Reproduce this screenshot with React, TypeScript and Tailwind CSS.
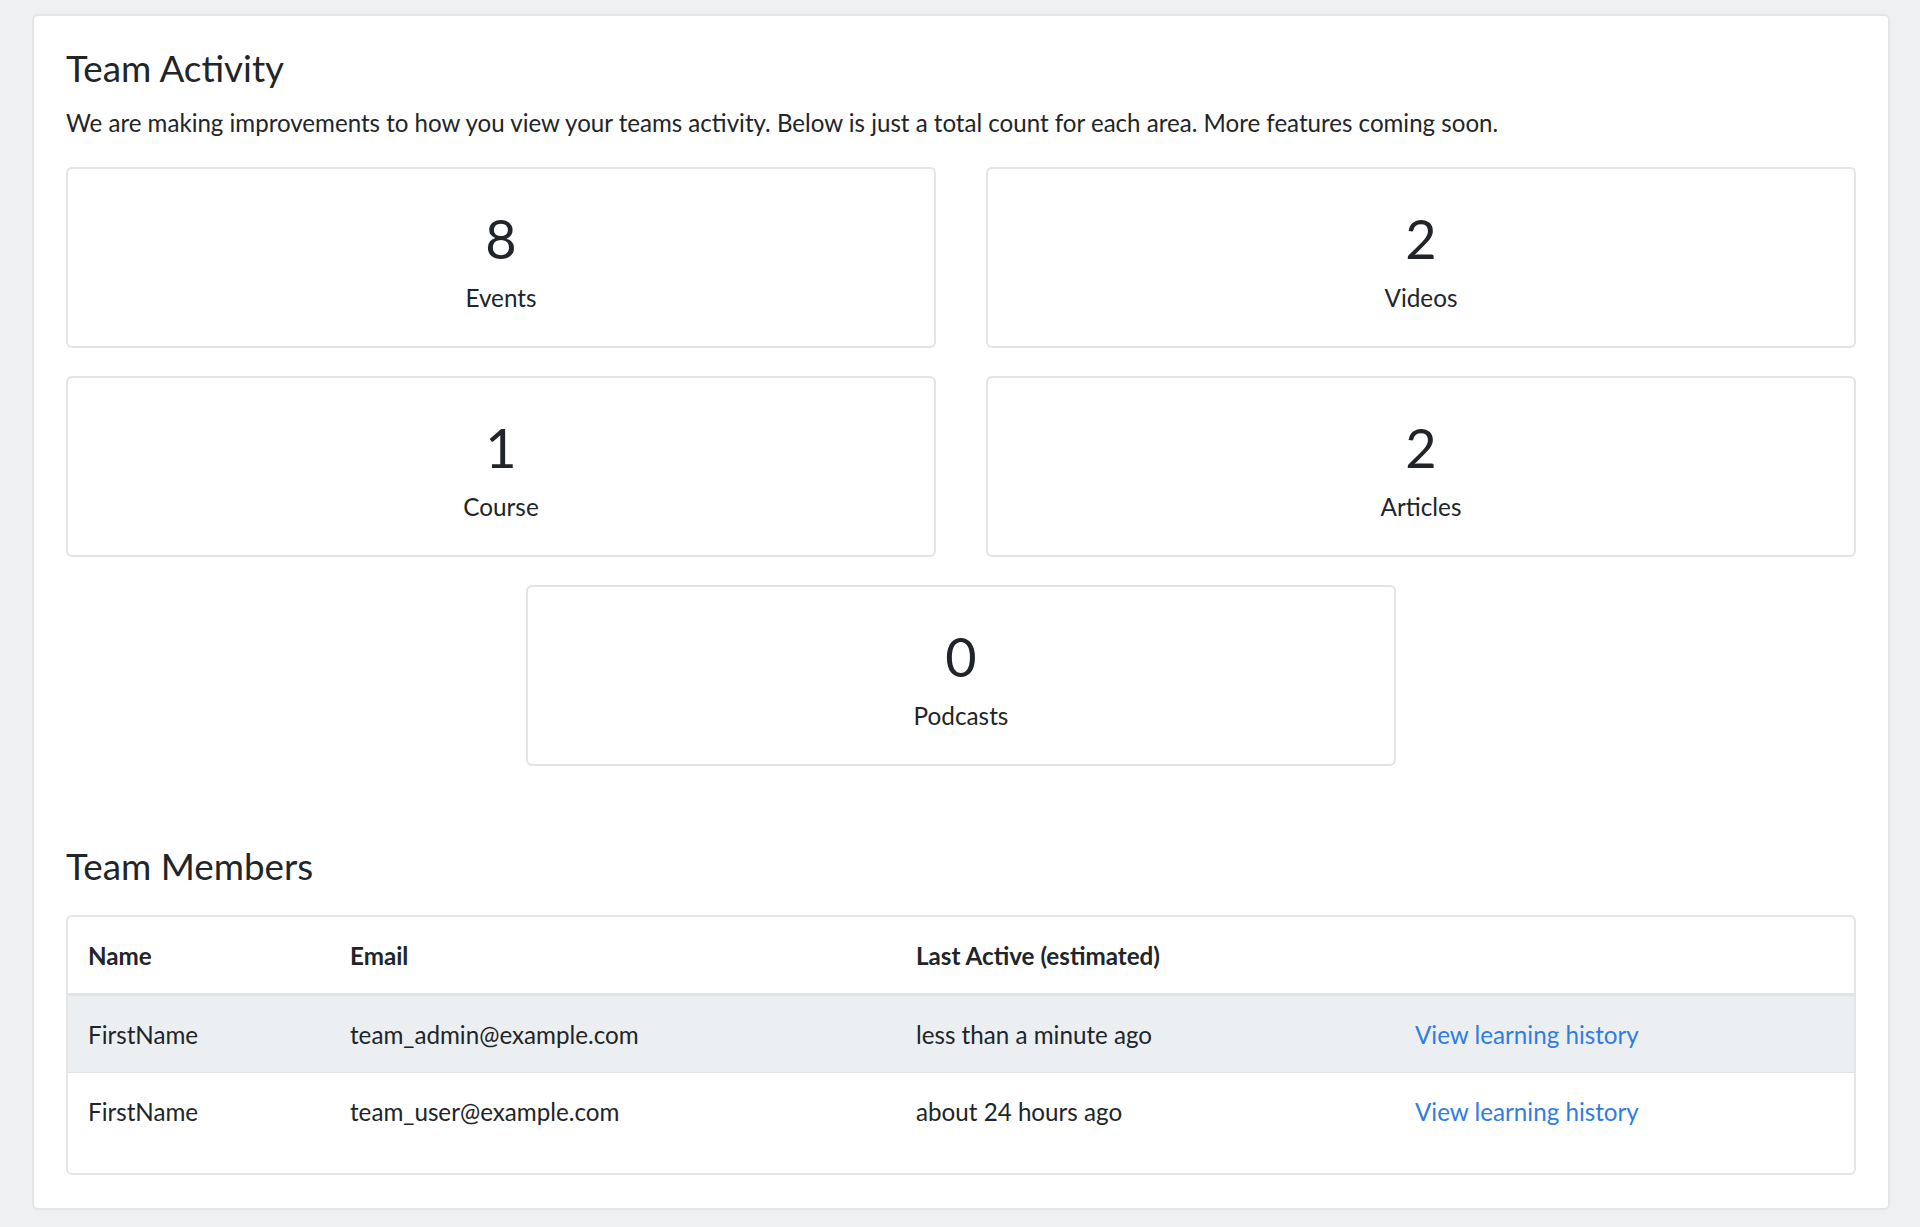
import React from "react";

const stats = [
  { n: "8", label: "Events" },
  { n: "2", label: "Videos" },
  { n: "1", label: "Course" },
  { n: "2", label: "Articles" },
];

function StatCard({ n, label }: { n: string; label: string }) {
  return (
    <div className="h-[181px] rounded-[6px] border-2 border-[#e4e4e5] bg-white pt-[37px] text-center">
      <div className="mb-[9px] text-[54px] leading-[65px]">{n}</div>
      <div className="text-[24.3px] leading-[36px]">{label}</div>
    </div>
  );
}

const members = [
  { name: "FirstName", email: "team_admin@example.com", last: "less than a minute ago" },
  { name: "FirstName", email: "team_user@example.com", last: "about 24 hours ago" },
];

export default function App() {
  return (
    <div
      className="min-h-screen bg-[#eef0f2] pl-[32px] pt-[14px] pb-[17px] text-[#212529]"
      style={{ fontFamily: "Lato, 'Open Sans', sans-serif" }}
    >
      <div className="w-[1858px] rounded-[6px] border-2 border-[#e4e5e7] bg-white px-[32px] pt-[31px] pb-[33px]">
        <h2 className="mb-[15px] text-[36.8px] leading-[43px] font-normal">Team Activity</h2>
        <p className="mb-[26px] text-[24.1px] leading-[36px]">
          We are making improvements to how you view your teams activity. Below is just a total count for each area. More features coming soon.
        </p>
        <div className="grid grid-cols-2 gap-x-[50px] gap-y-[28px]">
          {stats.map((s, i) => (
            <StatCard key={i} n={s.n} label={s.label} />
          ))}
          <div className="col-span-2 flex justify-center">
            <div className="w-[870px]">
              <StatCard n="0" label="Podcasts" />
            </div>
          </div>
        </div>
        <h2 className="mt-[79px] mb-[27px] text-[36.8px] leading-[43px] font-normal">Team Members</h2>
        <div className="overflow-hidden rounded-[6px] border-2 border-[#e4e5e7] pb-[24px]">
          <table className="w-full table-fixed border-collapse text-left text-[24.2px] leading-[36px]">
            <colgroup>
              <col className="w-[262px]" />
              <col className="w-[566px]" />
              <col className="w-[499px]" />
              <col />
            </colgroup>
            <thead>
              <tr className="border-b-[3px] border-[#e1e4e7]">
                <th className="px-[20px] pt-[21px] pb-[19px] font-bold">Name</th>
                <th className="px-[20px] pt-[21px] pb-[19px] font-bold">Email</th>
                <th className="px-[20px] pt-[21px] pb-[19px] font-bold">Last Active (estimated)</th>
                <th className="px-[20px] pt-[21px] pb-[19px]"></th>
              </tr>
            </thead>
            <tbody>
              {members.map((m, i) => (
                <tr
                  key={i}
                  className={i === 0 ? "border-b border-[#e1e4e7] bg-[#eceff1]" : "bg-white"}
                >
                  <td className="px-[20px] pt-[21px] pb-[19px]">{m.name}</td>
                  <td className="px-[20px] pt-[21px] pb-[19px]">{m.email}</td>
                  <td className="px-[20px] pt-[21px] pb-[19px]">{m.last}</td>
                  <td className="px-[20px] pt-[21px] pb-[19px]">
                    <a href="#" className="text-[#2f7de1]">
                      View learning history
                    </a>
                  </td>
                </tr>
              ))}
            </tbody>
          </table>
        </div>
      </div>
    </div>
  );
}
